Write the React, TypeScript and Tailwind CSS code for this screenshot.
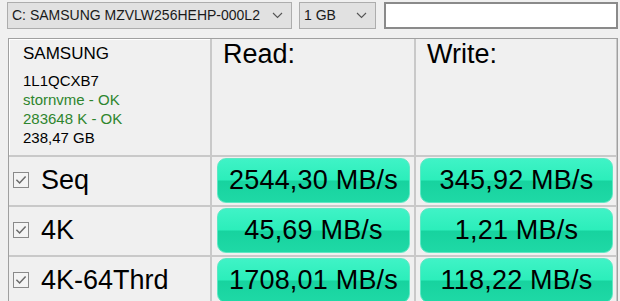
import React from "react";

const rows = [
    { label: "Seq", read: "2544,30 MB/s", write: "345,92 MB/s" },
    { label: "4K", read: "45,69 MB/s", write: "1,21 MB/s" },
    { label: "4K-64Thrd", read: "1708,01 MB/s", write: "118,22 MB/s" },
];

function Chevron() {
    return (
        <svg width="11" height="7" viewBox="0 0 11 7" className="shrink-0">
            <path d="M1 1 L5.5 5.5 L10 1" fill="none" stroke="#555" strokeWidth="1.1" />
        </svg>
    );
}

function CheckBox() {
    return (
        <svg width="16" height="16" viewBox="0 0 16 16" className="shrink-0">
            <rect x="0.5" y="0.5" width="15" height="15" fill="#f4f4f4" stroke="#8a8a8a" />
            <path d="M3.4 7.8 L6.6 11 L12.6 4.4" fill="none" stroke="#6a6a6a" strokeWidth="1.5" />
        </svg>
    );
}

function Score({ value }: { value: string }) {
    return (
        <div className="h-[45px] w-full rounded-[9px] border border-[#5ee8c4] bg-[linear-gradient(to_bottom,#3ff3c6_0%,#2ceebb_48%,#17d39f_52%,#1fd9a6_100%)] flex items-center justify-center text-[27px] leading-none text-black tracking-[0.2px]">
            {value}
        </div>
    );
}

export default function App() {
    return (
        <div className="w-[620px] h-[301px] overflow-hidden bg-[#f0f0f0] font-['Liberation_Sans',Arial,sans-serif] text-black">
            <div className="flex items-center pt-[2px] h-[29px] pl-[7px] pr-[2px]">
                <div className="w-[285px] h-[27px] border border-[#adadad] bg-[#e1e1e1] flex items-center justify-between pl-[4px] pr-[8px] text-[14px] text-[#1a1a1a]">
                    <span>C: SAMSUNG MZVLW256HEHP-000L2</span>
                    <Chevron />
                </div>
                <div className="ml-[7px] w-[77px] h-[27px] border border-[#adadad] bg-[#e1e1e1] flex items-center justify-between pl-[4px] pr-[8px] text-[14px] text-[#1a1a1a]">
                    <span>1 GB</span>
                    <Chevron />
                </div>
                <div className="ml-[8px] flex-1 h-[27px] border-2 border-[#8a8a8a] bg-white" />
            </div>

            <div className="mt-[9px] ml-[8px] w-[610px] border border-[#a0a0a0] bg-[#c9c9c9] grid grid-cols-[201px_202px_200px] grid-rows-[116px_48px_48px_48px] gap-[2px]">
                <div className="bg-[#f0f0f0] border-l border-t border-white pl-[13px] pt-[4px]">
                    <div className="text-[17px] leading-[20px]">SAMSUNG</div>
                    <div className="mt-[7px] text-[15px] leading-[19px]">
                        <div>1L1QCXB7</div>
                        <div className="text-[#2e852e]">stornvme - OK</div>
                        <div className="text-[#2e852e]">283648 K - OK</div>
                        <div>238,47 GB</div>
                    </div>
                </div>
                <div className="bg-[#f0f0f0] pl-[11px] text-[27px] leading-[31px]">Read:</div>
                <div className="bg-[#f0f0f0] pl-[11px] text-[27px] leading-[31px]">Write:</div>

                {rows.map((r) => (
                    <React.Fragment key={r.label}>
                        <div className="bg-[#f0f0f0] flex items-center pl-[4px] pb-[2px] gap-[12px] text-[27px]">
                            <CheckBox />
                            <span>{r.label}</span>
                        </div>
                        <div className="bg-[#f0f0f0] pt-[1px] pl-[5px] pr-[4px]">
                            <Score value={r.read} />
                        </div>
                        <div className="bg-[#f0f0f0] pt-[1px] pl-[4px] pr-[3px]">
                            <Score value={r.write} />
                        </div>
                    </React.Fragment>
                ))}
            </div>
        </div>
    );
}
